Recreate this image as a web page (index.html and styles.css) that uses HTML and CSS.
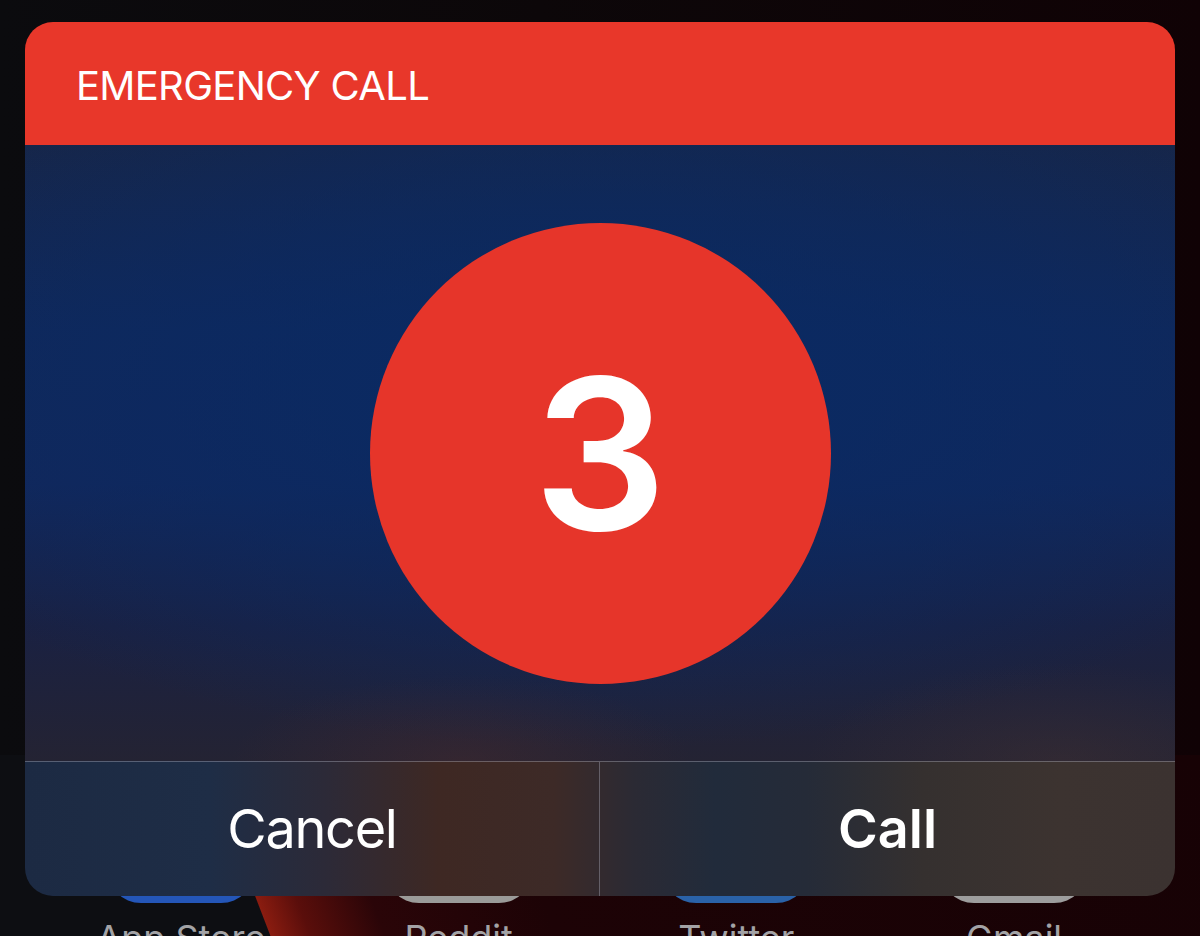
FILE: index.html
```html
<!DOCTYPE html>
<html lang="en">
<head>
<meta charset="utf-8">
<title>Emergency Call</title>
<link rel="stylesheet" href="styles.css">
</head>
<body>
<main class="screen">
  <section class="alert">
    <header class="alert-header">
      <h1 class="alert-title">EMERGENCY CALL</h1>
    </header>
    <div class="alert-body">
      <div class="countdown">3</div>
    </div>
    <footer class="alert-actions">
      <button class="action action-cancel">Cancel</button>
      <button class="action action-call">Call</button>
    </footer>
  </section>
  <nav class="apps">
    <div class="app"><div class="app-icon icon-appstore"></div><span class="app-label">App Store</span></div>
    <div class="app"><div class="app-icon icon-reddit"></div><span class="app-label">Reddit</span></div>
    <div class="app"><div class="app-icon icon-twitter"></div><span class="app-label">Twitter</span></div>
    <div class="app"><div class="app-icon icon-gmail"></div><span class="app-label">Gmail</span></div>
  </nav>
</main>
</body>
</html>
```

FILE: styles.css
```css
* { box-sizing: border-box; }

html, body {
  margin: 0;
  padding: 0;
}

body {
  width: 1200px;
  height: 936px;
  overflow: hidden;
  font-family: Inter, "Liberation Sans", sans-serif;
  background: linear-gradient(90deg, #0b0b0e 0%, #0c0709 45%, #100205 100%);
}

.screen {
  display: flex;
  flex-direction: column;
  height: 936px;
}

.alert {
  position: relative;
  z-index: 1;
  margin: 22px 25px 0;
  height: 874px;
  border-radius: 28px;
  overflow: hidden;
  display: flex;
  flex-direction: column;
}

.alert-header {
  height: 123px;
  flex: none;
  background: #e8372a;
  display: flex;
  align-items: center;
  padding: 0 0 0 51px;
}

.alert-title {
  margin: 0;
  color: #ffffff;
  font-size: 40px;
  font-weight: 400;
  letter-spacing: -0.7px;
  line-height: 1;
  padding-top: 4px;
}

.alert-body {
  height: 616px;
  flex: none;
  display: flex;
  align-items: center;
  justify-content: center;
  background:
    radial-gradient(ellipse 20% 14% at 38% 100%, rgba(90, 45, 40, 0.3), rgba(90, 45, 40, 0) 100%),
    radial-gradient(ellipse 22% 16% at 90% 100%, rgba(80, 55, 50, 0.3), rgba(80, 55, 50, 0) 100%),
    radial-gradient(ellipse 70% 58% at 50% 40%, rgba(9, 42, 100, 0.95) 0%, rgba(9, 42, 100, 0.5) 55%, rgba(9, 42, 100, 0) 100%),
    linear-gradient(180deg, #16264a 0%, #10285a 30%, #12275a 55%, #1a2142 78%, #242333 100%);
}

.countdown {
  width: 461px;
  height: 461px;
  border-radius: 50%;
  background: #e6352a;
  color: #ffffff;
  display: flex;
  align-items: center;
  justify-content: center;
  font-size: 210px;
  font-weight: 600;
  line-height: 1;
  padding-top: 2px;
}

.alert-actions {
  flex: 1;
  display: grid;
  grid-template-columns: 1fr 1fr;
  border-top: 1px solid rgba(160, 160, 175, 0.45);
  background: linear-gradient(90deg,
    #1c2a43 0%, #1e2d46 16%, #2c2a38 26%, #3e2823 36%, #3d2a27 46%,
    #2b2a34 53%, #212b3b 60%, #252b38 68%, #35302f 78%, #3c3330 90%, #3b3230 100%);
}

.action {
  border: 0;
  background: transparent;
  color: #ffffff;
  font-family: Inter, "Liberation Sans", sans-serif;
  font-size: 54px;
  line-height: 1;
  padding: 0;
  display: flex;
  align-items: center;
  justify-content: center;
}

.action-cancel {
  font-weight: 400;
  letter-spacing: -1.3px;
  border-right: 1px solid rgba(160, 160, 175, 0.45);
}

.action-call {
  font-weight: 600;
}

.apps {
  margin-top: -141px;
  height: 181px;
  display: grid;
  grid-template-columns: repeat(4, 148px);
  column-gap: 129.7px;
  padding-left: 107px;
  background: linear-gradient(69deg,
    #0d0e12 0px, #0d0e12 252px, #8a1c10 253px, #5a0e0b 290px,
    #2a0508 360px, #1d0306 520px, #170205 100%);
}

.app {
  display: flex;
  flex-direction: column;
  align-items: center;
}

.app-icon {
  width: 148px;
  height: 148px;
  border-radius: 34px;
  flex: none;
}

.icon-appstore { background: #2456b8; }
.icon-reddit { background: #9b9b99; }
.icon-twitter { background: #2a62a8; }
.icon-gmail { background: #9d9d9d; }

.app-label {
  margin-top: 14px;
  white-space: nowrap;
  color: #a3a3a6;
  font-size: 36px;
  line-height: 1.2;
}
```
